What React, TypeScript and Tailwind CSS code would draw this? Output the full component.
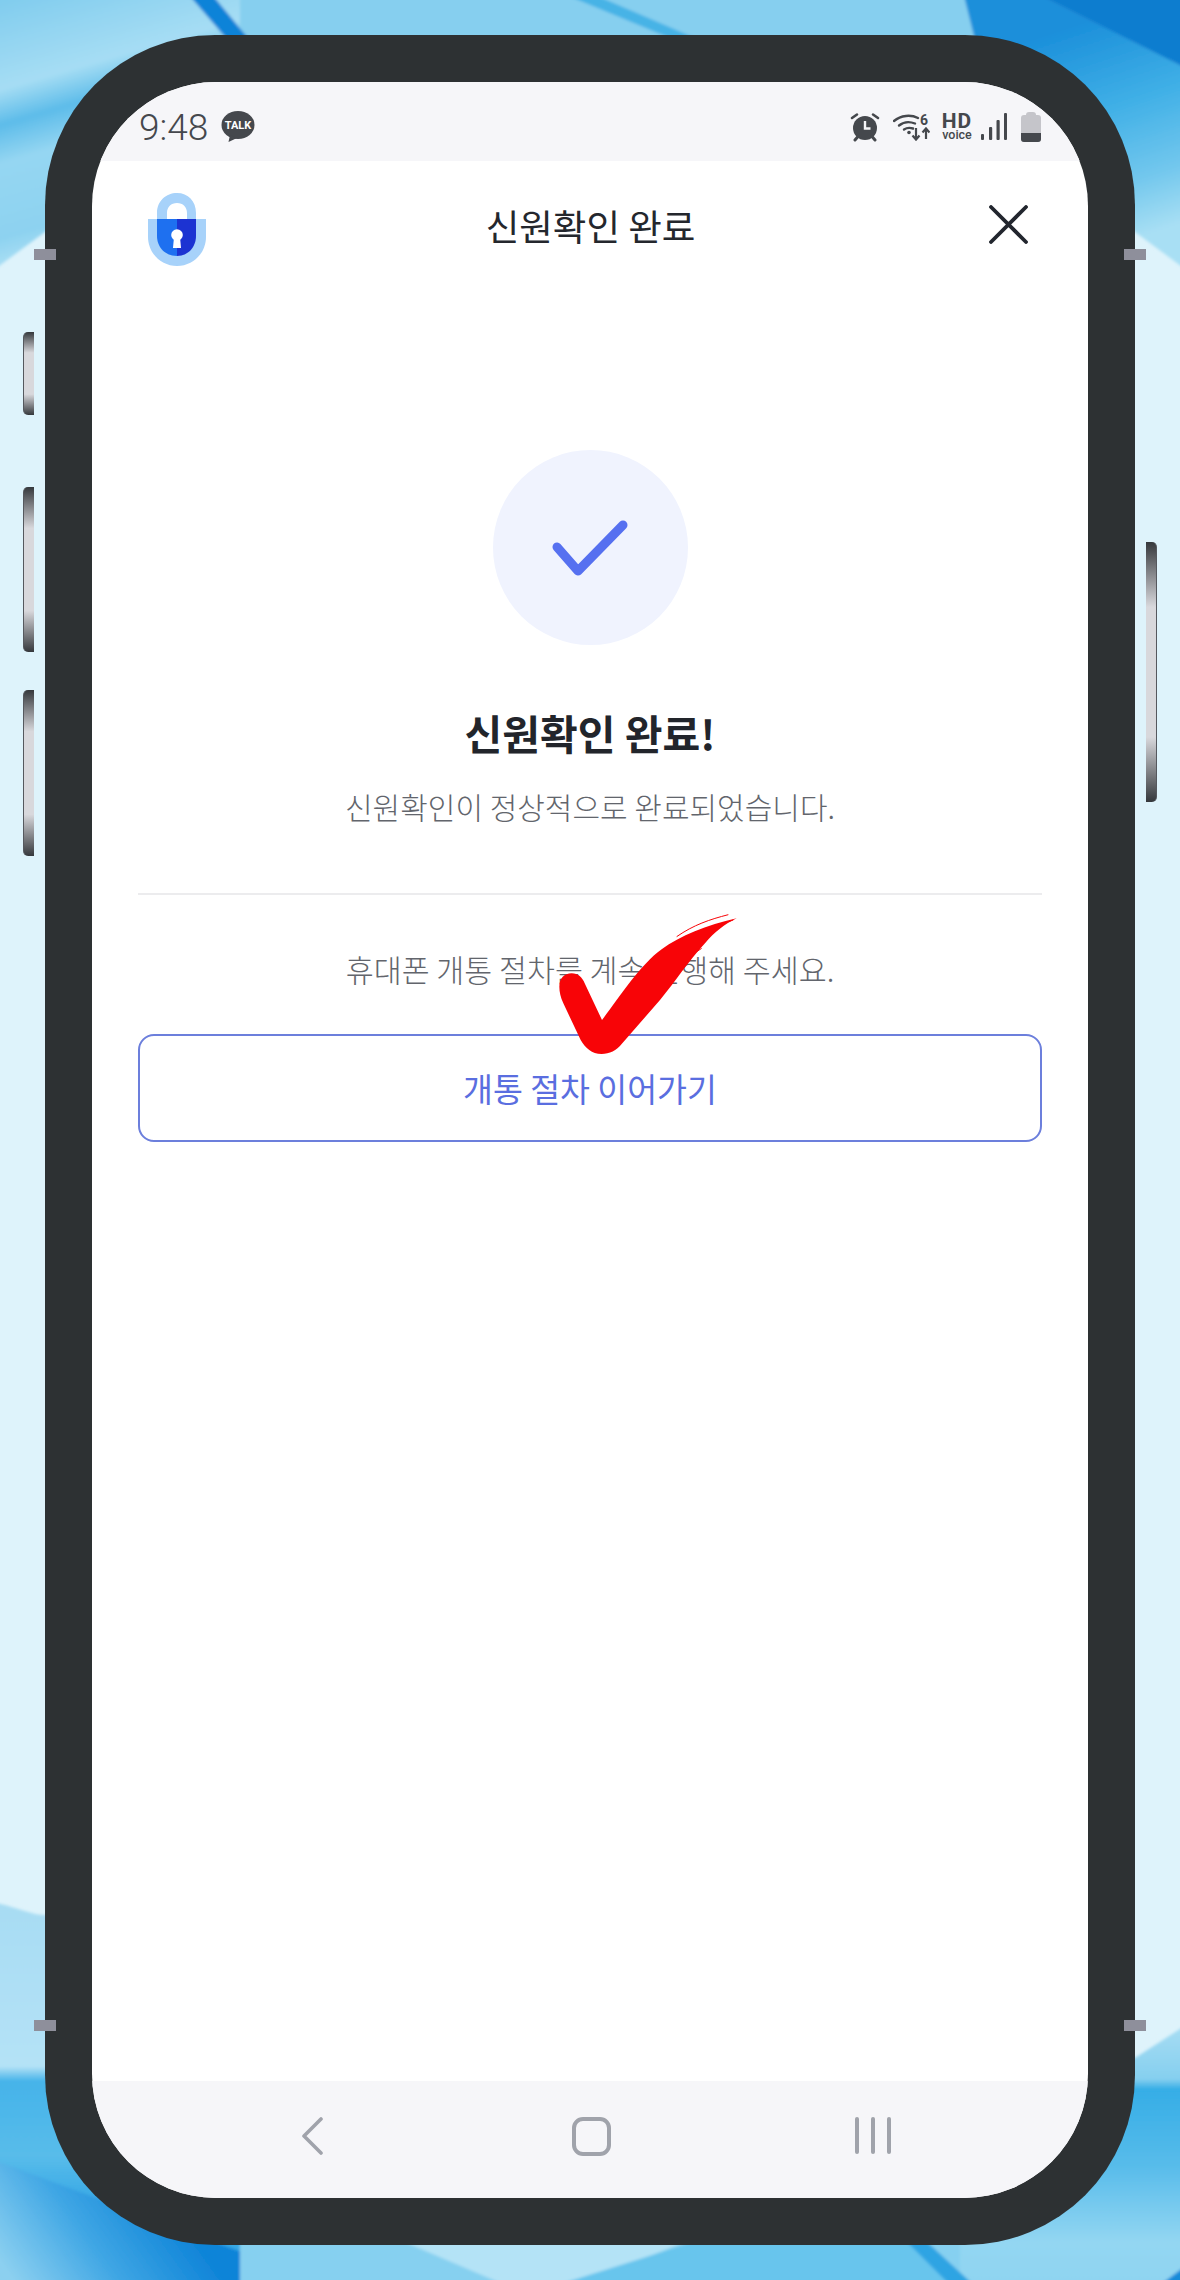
const krFont = "font-['Noto_Sans_CJK_KR','Noto_Sans',sans-serif]";

const Backdrop = () => (
  <svg className="absolute inset-0" width="1180" height="2280" viewBox="0 0 1180 2280">
    <defs>
      <filter id="soft" filterUnits="userSpaceOnUse" x="-40" y="-40" width="1260" height="2360">
        <feGaussianBlur stdDeviation="1.6" />
      </filter>
      <linearGradient id="topLeft" gradientUnits="userSpaceOnUse" x1="0" y1="0" x2="80" y2="275">
        <stop offset="0" stopColor="#80ccee" />
        <stop offset="0.3" stopColor="#a6ddf4" />
        <stop offset="0.42" stopColor="#5dbce9" />
        <stop offset="0.55" stopColor="#95d6f2" />
        <stop offset="0.8" stopColor="#8dd2f0" />
        <stop offset="1" stopColor="#c9ecf9" />
      </linearGradient>
      <linearGradient id="topRight" gradientUnits="userSpaceOnUse" x1="1090" y1="20" x2="1160" y2="230">
        <stop offset="0" stopColor="#1b8fda" />
        <stop offset="0.4" stopColor="#3fafe6" />
        <stop offset="0.75" stopColor="#72c7ed" />
        <stop offset="1" stopColor="#a8dff4" />
      </linearGradient>
      <linearGradient id="lowLeft" gradientUnits="userSpaceOnUse" x1="0" y1="1903" x2="0" y2="2200">
        <stop offset="0" stopColor="#a7dcf3" />
        <stop offset="0.55" stopColor="#b4e2f6" />
        <stop offset="0.6" stopColor="#45b3e9" />
        <stop offset="0.85" stopColor="#58bcea" />
        <stop offset="1" stopColor="#39a9e5" />
      </linearGradient>
      <linearGradient id="lowRight" gradientUnits="userSpaceOnUse" x1="0" y1="2029" x2="0" y2="2280">
        <stop offset="0" stopColor="#a5dcf3" />
        <stop offset="0.2" stopColor="#85cfef" />
        <stop offset="0.24" stopColor="#35ade6" />
        <stop offset="0.55" stopColor="#58bcea" />
        <stop offset="0.85" stopColor="#93d6f2" />
        <stop offset="1" stopColor="#8fd4f1" />
      </linearGradient>
      <linearGradient id="sweep" gradientUnits="userSpaceOnUse" x1="160" y1="2190" x2="20" y2="2290">
        <stop offset="0" stopColor="#0f84d8" />
        <stop offset="0.5" stopColor="#3fa6e4" />
        <stop offset="1" stopColor="#8cd0f0" />
      </linearGradient>
    </defs>
    <rect width="1180" height="2280" fill="#def3fb" />
    <g filter="url(#soft)">
      <path d="M-20 -20H1200V40H300L45 232L-20 280Z" fill="url(#topLeft)" />
      <path d="M240 -20H1200V40H240Z" fill="#86cfef" />
      <path d="M176 -20H200L248 38H226Z" fill="#0d83d8" />
      <path d="M530 -20H560L695 38H670Z" fill="#46b3e6" />
      <path d="M960 -20H1200V280L1135 232L980 60Z" fill="url(#topRight)" />
      <path d="M1010 -20H1200V75Z" fill="#0a7dcf" />

      <path d="M-20 1900C15 1905 30 1915 45 1915L280 1915V2260H-20Z" fill="url(#lowLeft)" />
      <path d="M-20 2155L250 2255L280 2300H-20Z" fill="url(#sweep)" />
      <path d="M1200 2016L1135 2058L940 2058V2300H1200Z" fill="url(#lowRight)" />
      <path d="M1140 2300L1200 2255V2300Z" fill="#158bd9" />

      <path d="M240 2240H960V2300H240Z" fill="#86d0f0" />
      <path d="M400 2240H690L540 2300Z" fill="#b4e3f6" />
      <path d="M510 2300L700 2240H925L985 2300Z" fill="#68c5ed" />
      <path d="M905 2240H925L990 2300H965Z" fill="#2ea4e3" />
    </g>
  </svg>
);

const SideKey = ({ className }: { className: string }) => (
  <div className={`absolute w-[11px] bg-[linear-gradient(to_bottom,#35383c,#d8d8dc_25%,#d8d8dc_75%,#35383c)] ${className}`} />
);

const Tab = ({ className }: { className: string }) => (
  <div className={`absolute w-[22px] h-[11px] bg-[#8e8f9b] ${className}`} />
);

const TalkBubble = () => (
  <svg width="34" height="32" viewBox="0 0 34 32">
    <ellipse cx="17" cy="14" rx="16.5" ry="14" fill="#45484d" />
    <path d="M9 24L7.5 31L16 27Z" fill="#45484d" />
    <text x="17" y="18" textAnchor="middle" fontSize="11" fontWeight="700" fill="#fff" fontFamily="Roboto, sans-serif">TALK</text>
  </svg>
);

const AlarmIcon = () => (
  <svg width="30" height="30" viewBox="0 0 30 30">
    <circle cx="15" cy="16" r="12" fill="#45484d" />
    <path d="M15 9V16.5H20.5" fill="none" stroke="#f6f6f9" strokeWidth="2.4" />
    <path d="M2 6L7 2.5M28 6L23 2.5" stroke="#45484d" strokeWidth="2.6" strokeLinecap="round" />
    <path d="M5 28L8 24.5M25 28L22 24.5" stroke="#45484d" strokeWidth="3" strokeLinecap="round" />
  </svg>
);

const WifiIcon = () => (
  <svg width="37" height="30" viewBox="0 0 37 30">
    <path d="M1 9C8 3 18 2.5 25 6" fill="none" stroke="#45484d" strokeWidth="2.4" strokeLinecap="round" />
    <path d="M6 13.5C11 9.5 17 9.5 22 11.5" fill="none" stroke="#45484d" strokeWidth="2.4" strokeLinecap="round" />
    <path d="M11 17.5C14 15.5 17 15.5 20 16.5" fill="none" stroke="#45484d" strokeWidth="2.4" strokeLinecap="round" />
    <circle cx="16" cy="20.5" r="1.8" fill="#45484d" />
    <text x="31" y="13" textAnchor="middle" fontSize="14" fontWeight="700" fill="#45484d" fontFamily="Roboto, sans-serif">6</text>
    <path d="M23 16V27M19.5 23.5L23 27.5L26.5 23.5" fill="none" stroke="#45484d" strokeWidth="2.2" />
    <path d="M33 27V17M29.5 20.5L33 16.5L36.5 20.5" fill="none" stroke="#45484d" strokeWidth="2.2" />
  </svg>
);

const SignalIcon = () => (
  <svg width="26" height="28" viewBox="0 0 26 28">
    <rect x="0" y="21" width="3" height="6" rx="1" fill="#45484d" />
    <rect x="8" y="14" width="3.2" height="13" rx="1" fill="#45484d" />
    <rect x="15.5" y="7" width="3.2" height="20" rx="1" fill="#45484d" />
    <rect x="23" y="0" width="3" height="27" rx="1" fill="#45484d" />
  </svg>
);

const BatteryIcon = () => (
  <div className="flex flex-col items-center w-[20px] h-[30px]">
    <div className="w-[10px] h-[3px] bg-[#c5c5ca] rounded-t-sm" />
    <div className="w-full flex-1 flex flex-col justify-end bg-[#c5c5ca] rounded-[3px] overflow-hidden">
      <div className="h-[9px] bg-[#45484d]" />
    </div>
  </div>
);

const LockLogo = () => (
  <svg width="58" height="73" viewBox="0 0 58 73">
    <path d="M9 26V20C9 8 18 0 29 0C40 0 48 8 48 20V26H39V20C39 14 35 10 29 10C23 10 19 14 19 20V26Z" fill="#a7d2fa" />
    <path d="M0 26H58V44C58 60 45 73 29 73C13 73 0 60 0 44Z" fill="#a7d2fa" />
    <path d="M9 26H29V63C17 63 9 54 9 43Z" fill="#1e70f0" />
    <path d="M29 26H48V43C48 54 40 63 29 63Z" fill="#1c33d2" />
    <circle cx="29" cy="42" r="5.8" fill="#fff" />
    <path d="M26 44H32L33 55H25Z" fill="#fff" />
  </svg>
);

const RedTick = () => (
  <svg className="absolute left-[475px] top-[855px]" width="240" height="180" viewBox="0 0 720 540">
    <path
      d="M118 290C118 265 133 250 155 250C174 250 187 262 194 280L246 390C300 320 360 225 425 178C480 138 560 105 650 85C610 105 585 125 555 160C500 220 470 270 420 330L305 462C290 482 268 492 245 492C215 492 197 475 182 450L130 340C122 322 118 306 118 290Z"
      fill="#f80407"
    />
    <path d="M470 140C520 105 570 88 625 74M500 155C550 125 590 105 640 90M500 205L545 175" fill="none" stroke="#f80407" strokeWidth="3" />
  </svg>
);

export default function App() {
  return (
    <div className="relative w-[1180px] h-[2280px] overflow-hidden flex justify-center pt-[35px]">
      <Backdrop />
      <SideKey className="left-[23px] top-[332px] h-[83px] rounded-l-[5px] border-l border-[#55585e]" />
      <SideKey className="left-[23px] top-[487px] h-[165px] rounded-l-[5px] border-l border-[#55585e]" />
      <SideKey className="left-[23px] top-[690px] h-[166px] rounded-l-[5px] border-l border-[#55585e]" />
      <SideKey className="left-[1146px] top-[542px] h-[260px] rounded-r-[5px] border-r border-[#55585e]" />

      <div className="relative w-[1090px] h-[2210px] rounded-[170px] bg-[#2d3133] p-[47px]">
        <div className={`relative h-full flex flex-col bg-white rounded-[124px] overflow-hidden ${krFont}`}>
          <div className="h-[79px] shrink-0 bg-[#f6f6f9] flex items-center justify-between pl-[47px] pr-[47px] pt-[11px]">
            <div className="flex items-center gap-[13px]">
              <span className="font-['Roboto',sans-serif] font-light text-[37px] leading-none text-[#45484d]">9:48</span>
              <TalkBubble />
            </div>
            <div className="flex items-center">
              <AlarmIcon />
              <div className="ml-[13px]"><WifiIcon /></div>
              <div className="ml-[11px] w-[32px] flex flex-col items-center font-['Roboto',sans-serif] text-[#45484d] leading-none">
                <span className="text-[21px] font-bold leading-[16px] tracking-[1px]">HD</span>
                <span className="text-[12.5px] font-medium leading-[12px]">voice</span>
              </div>
              <div className="ml-[8px]"><SignalIcon /></div>
              <div className="ml-[14px]"><BatteryIcon /></div>
            </div>
          </div>

          <div className="flex-1 flex flex-col">
            <div className="h-[88px] shrink-0 flex items-center justify-between pl-[56px] pr-[60px] mt-[24px]">
              <LockLogo />
              <h1 className="mr-[14px] text-[36.5px] text-[#24272d] leading-none font-normal -mt-[6px]">신원확인 완료</h1>
              <svg width="39" height="39" viewBox="0 0 39 39" className="-mt-[10px]">
                <path d="M2 2L37 37M37 2L2 37" stroke="#22262e" strokeWidth="3.8" strokeLinecap="round" />
              </svg>
            </div>

            <div className="flex flex-col items-center px-[46px] pt-[177px]">
              <div className="w-[195px] h-[195px] rounded-full bg-[#f0f3fe] flex items-center justify-center">
                <svg width="76" height="56" viewBox="0 0 76 56">
                  <path d="M5 27L26 51L71 5" fill="none" stroke="#5670f0" strokeWidth="9" strokeLinecap="round" strokeLinejoin="round" />
                </svg>
              </div>
              <h2 className="mt-[62px] text-[41px] leading-[50px] font-bold text-[#22252b]">신원확인 완료!</h2>
              <p className="mt-[29px] text-[30px] leading-[40px] text-[#62656c] font-light">신원확인이 정상적으로 완료되었습니다.</p>
              <div className="w-full h-[2px] bg-[#ececee] mt-[67px]" />
              <p className="mt-[54px] text-[30.4px] leading-[40px] text-[#62656c] font-light">휴대폰 개통 절차를 계속 진행해 주세요.</p>
              <button
                type="button"
                className="mt-[45px] w-full h-[108px] rounded-[16px] border-2 border-[#6c7fdc] text-[32.5px] text-[#5a6ee0] bg-white"
              >
                개통 절차 이어가기
              </button>
            </div>
          </div>

          <div className="h-[117px] shrink-0 bg-[#f6f6f9] flex items-start justify-between pl-[209px] pr-[197px] pt-[36px]">
            <svg width="22" height="38" viewBox="0 0 22 38">
              <path d="M20 2L3 19L20 36" fill="none" stroke="#a0a3ab" strokeWidth="3.6" strokeLinecap="round" strokeLinejoin="round" />
            </svg>
            <div className="ml-[5px] w-[39px] h-[39px] rounded-[11px] border-[4px] border-[#a0a3ab]" />
            <div className="flex gap-[12px] h-[37px]">
              <div className="w-[4px] bg-[#a0a3ab] rounded-full" />
              <div className="w-[4px] bg-[#a0a3ab] rounded-full" />
              <div className="w-[4px] bg-[#a0a3ab] rounded-full" />
            </div>
          </div>
        </div>

        <RedTick />
      </div>

      <Tab className="left-[34px] top-[249px]" />
      <Tab className="left-[1124px] top-[249px]" />
      <Tab className="left-[34px] top-[2020px]" />
      <Tab className="left-[1124px] top-[2020px]" />
    </div>
  );
}
